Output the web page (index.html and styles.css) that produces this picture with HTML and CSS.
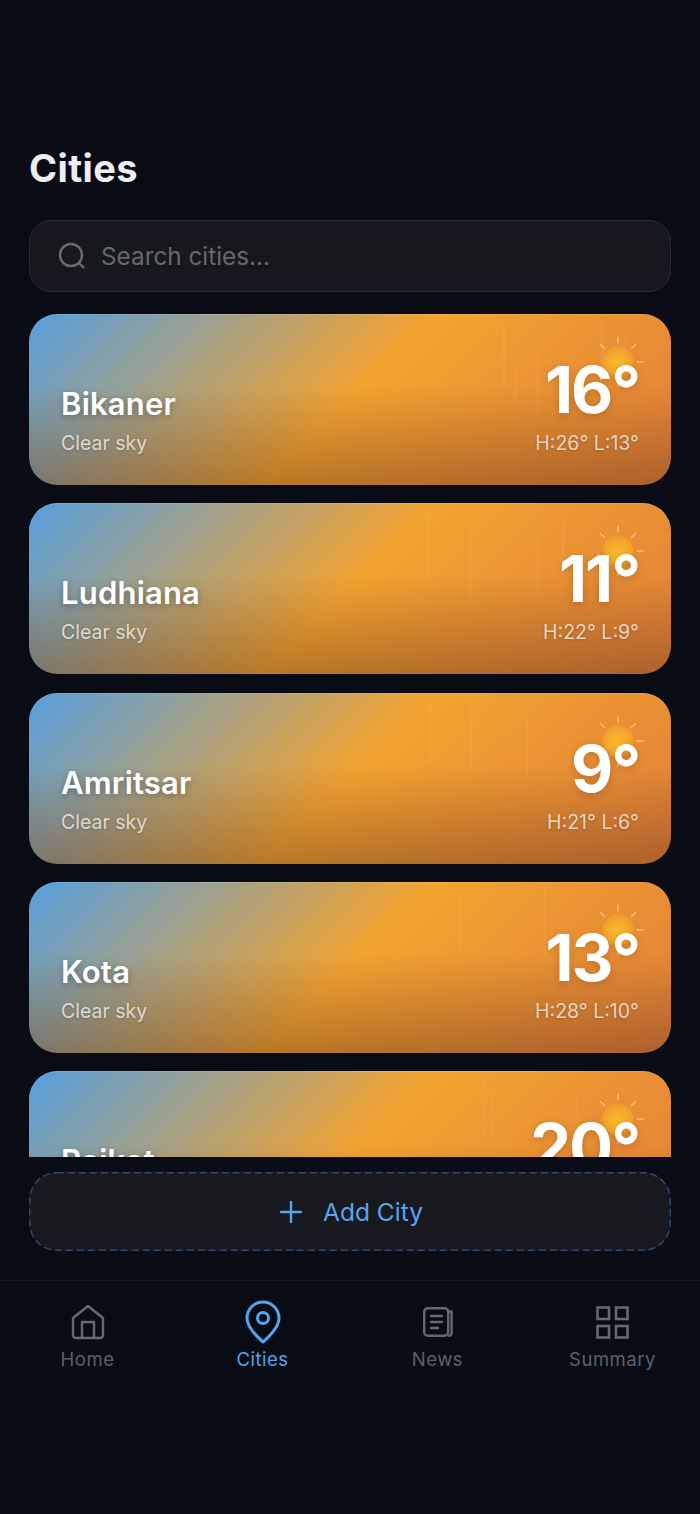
FILE: index.html
```html
<!DOCTYPE html>
<html lang="en">
<head>
    <meta charset="UTF-8">
    <meta name="viewport" content="width=device-width, initial-scale=1.0">
    <title>Cities</title>
    <link rel="stylesheet" href="styles.css">
</head>
<body>

<svg class="defs" width="0" height="0" aria-hidden="true">
    <defs>
        <radialGradient id="sunFill" cx="50%" cy="55%" r="50%">
            <stop offset="0%" stop-color="#fbbb2c"/>
            <stop offset="75%" stop-color="#f4a82b"/>
            <stop offset="100%" stop-color="#ee9f2e"/>
        </radialGradient>
        <symbol id="sun" viewBox="0 0 60 60">
            <circle cx="30" cy="30" r="15.5" fill="url(#sunFill)"/>
            <g stroke="#ffe2b0" stroke-opacity="0.6" stroke-width="1.4" stroke-linecap="round">
                <path d="M30 5v6M30 49v6M49 30h6M12.5 12.5l4 4M47.5 12.5l-4 4M12.5 47.5l4-4"/>
            </g>
        </symbol>
    </defs>
</svg>

<div class="screen">
    <h1 class="title">Cities</h1>

    <div class="search">
        <svg class="search-icon" viewBox="0 0 28 28" fill="none" stroke="#6a6b71" stroke-width="2.4" stroke-linecap="round">
            <circle cx="13" cy="13" r="11"/>
            <path d="M21.5 21.5l4 4"/>
        </svg>
        <span class="search-text">Search cities...</span>
    </div>

    <div class="city-list">
        <div class="city-card">
            <svg class="rain" viewBox="0 0 642 171" stroke="#ffffff" stroke-opacity="0.05" stroke-width="3">
                <path d="M475 10v60M486 50v40M509 35v70M573 5v70M596 25v40"/>
            </svg>
            <svg class="sun"><use href="#sun"/></svg>
            <div class="city-info">
                <div class="city-name">Bikaner</div>
                <div class="city-desc">Clear sky</div>
            </div>
            <div class="city-temp">
                <div class="temp">16°</div>
                <div class="range">H:26° L:13°</div>
            </div>
        </div>

        <div class="city-card">
            <svg class="rain" viewBox="0 0 642 171" stroke="#ffffff" stroke-opacity="0.05" stroke-width="3">
                <path d="M399 5v70M441 25v70M509 30v60M534 12v60"/>
            </svg>
            <svg class="sun"><use href="#sun"/></svg>
            <div class="city-info">
                <div class="city-name">Ludhiana</div>
                <div class="city-desc">Clear sky</div>
            </div>
            <div class="city-temp">
                <div class="temp">11°</div>
                <div class="range">H:22° L:9°</div>
            </div>
        </div>

        <div class="city-card">
            <svg class="rain" viewBox="0 0 642 171" stroke="#ffffff" stroke-opacity="0.05" stroke-width="3">
                <path d="M401 10v60M442 5v70M498 25v60"/>
            </svg>
            <svg class="sun"><use href="#sun"/></svg>
            <div class="city-info">
                <div class="city-name">Amritsar</div>
                <div class="city-desc">Clear sky</div>
            </div>
            <div class="city-temp">
                <div class="temp">9°</div>
                <div class="range">H:21° L:6°</div>
            </div>
        </div>

        <div class="city-card">
            <svg class="rain" viewBox="0 0 642 171" stroke="#ffffff" stroke-opacity="0.05" stroke-width="3">
                <path d="M432 12v60M516 5v70"/>
            </svg>
            <svg class="sun"><use href="#sun"/></svg>
            <div class="city-info">
                <div class="city-name">Kota</div>
                <div class="city-desc">Clear sky</div>
            </div>
            <div class="city-temp">
                <div class="temp">13°</div>
                <div class="range">H:28° L:10°</div>
            </div>
        </div>

        <div class="city-card">
            <svg class="rain" viewBox="0 0 642 171" stroke="#ffffff" stroke-opacity="0.04" stroke-width="3">
                <path d="M456 5v60M464 20v50M548 25v50"/>
            </svg>
            <svg class="sun"><use href="#sun"/></svg>
            <div class="city-info">
                <div class="city-name">Rajkot</div>
                <div class="city-desc">Clear sky</div>
            </div>
            <div class="city-temp">
                <div class="temp">20°</div>
                <div class="range">H:30° L:14°</div>
            </div>
        </div>
    </div>

    <div class="add-city">
        <svg class="add-border" viewBox="0 0 642 79" fill="none">
            <rect x="0.75" y="0.75" width="640.5" height="77.5" rx="27" stroke="#2f4a72" stroke-width="1.5" stroke-dasharray="7 4"/>
        </svg>
        <svg class="add-icon" viewBox="0 0 22 22" fill="none" stroke="#55a6ee" stroke-width="2.4" stroke-linecap="round">
            <path d="M11 1v20M1 11h20"/>
        </svg>
        <span>Add City</span>
    </div>

    <nav class="bottom-nav">
        <div class="nav-item">
            <div class="nav-icon">
                <svg class="icon-home" viewBox="0 0 34 36" fill="none" stroke="#68696f" stroke-width="2.4" stroke-linejoin="round">
                    <path d="M2 14L17 2l15 12v17a3 3 0 0 1-3 3H5a3 3 0 0 1-3-3z"/>
                    <path d="M11 34V18h12v16"/>
                </svg>
            </div>
            <span>Home</span>
        </div>
        <div class="nav-item active">
            <div class="nav-icon">
                <svg class="icon-pin" viewBox="0 0 36 44" fill="none" stroke="#55a6ee" stroke-width="3" stroke-linejoin="round">
                    <path d="M18 42C10 35 2 27 2 18a16 16 0 0 1 32 0c0 9-8 17-16 24z"/>
                    <circle cx="18" cy="18" r="5.5"/>
                </svg>
            </div>
            <span>Cities</span>
        </div>
        <div class="nav-item">
            <div class="nav-icon">
                <svg class="icon-news" viewBox="0 0 30 30" fill="none" stroke="#68696f" stroke-width="2.4" stroke-linecap="round" stroke-linejoin="round">
                    <rect x="1.2" y="1.2" width="24" height="27.6" rx="3.5"/>
                    <path d="M25.2 4.5h3.4v22a2.3 2.3 0 0 1-2.3 2.3"/>
                    <path d="M8 9h11M8 15h11M8 21h7"/>
                </svg>
            </div>
            <span>News</span>
        </div>
        <div class="nav-item">
            <div class="nav-icon">
                <svg class="icon-grid" viewBox="0 0 33 33" fill="none" stroke="#68696f" stroke-width="2.6">
                    <rect x="1.5" y="1.5" width="11.5" height="11.5"/>
                    <rect x="20" y="1.5" width="11.5" height="11.5"/>
                    <rect x="1.5" y="20" width="11.5" height="11.5"/>
                    <rect x="20" y="20" width="11.5" height="11.5"/>
                </svg>
            </div>
            <span>Summary</span>
        </div>
    </nav>
</div>

</body>
</html>
```

FILE: styles.css
```css
/* Global styling */
* {
    box-sizing: border-box;
}

body {
    font-family: 'Inter', 'Liberation Sans', sans-serif;
    background-color: #090c15;
    margin: 0;
    padding: 0;
}

.defs {
    position: absolute;
}

.screen {
    width: 700px;
    height: 1514px;
    padding-top: 146px;
    overflow: hidden;
}

.title {
    margin: 0 29px;
    height: 45px;
    font-size: 38px;
    line-height: 45px;
    font-weight: 700;
    letter-spacing: 0.4px;
    color: #eeeef4;
}

/* Search box */
.search {
    display: flex;
    align-items: center;
    gap: 15px;
    height: 72px;
    margin: 29px 29px 22px;
    padding: 0 28px;
    background-color: #17181e;
    border: 1px solid #2a2b31;
    border-radius: 22px;
}

.search-icon {
    width: 28px;
    height: 28px;
}

.search-text {
    font-size: 24.3px;
    color: #66676d;
}

/* City cards */
.city-list {
    display: flex;
    flex-direction: column;
    gap: 18.3px;
    height: 843px;
    margin: 0 29px;
    overflow: hidden;
}

.city-card {
    position: relative;
    flex: none;
    display: flex;
    justify-content: space-between;
    align-items: flex-end;
    height: 171px;
    padding: 0 32px 28px 32px;
    border-radius: 28px;
    overflow: hidden;
    background:
        linear-gradient(180deg, rgba(0, 0, 0, 0) 42%, rgba(60, 30, 20, 0.32) 100%),
        linear-gradient(135deg, #559fdf 0%, #f3a32f 50%, #e27f38 100%);
    box-shadow: inset 0 1px 0 rgba(255, 255, 255, 0.12);
}

.rain {
    position: absolute;
    inset: 0;
    width: 100%;
    height: 100%;
}

.sun {
    position: absolute;
    top: 18px;
    right: 23px;
    width: 60px;
    height: 60px;
}

.city-info,
.city-temp {
    position: relative;
}

.city-name {
    font-size: 31px;
    line-height: 38px;
    font-weight: 600;
    letter-spacing: 0.2px;
    color: #ffffff;
    text-shadow: 0 2px 6px rgba(0, 0, 0, 0.3);
}

.city-desc {
    margin-top: 6px;
    font-size: 19.5px;
    line-height: 28px;
    color: rgba(255, 255, 255, 0.72);
    text-shadow: 0 1px 3px rgba(0, 0, 0, 0.2);
}

.city-temp {
    text-align: right;
}

.temp {
    font-size: 65px;
    line-height: 76px;
    font-weight: 700;
    letter-spacing: -2px;
    color: #ffffff;
    text-shadow: 0 2px 8px rgba(0, 0, 0, 0.18);
}

.range {
    margin-top: 1px;
    font-size: 19.5px;
    line-height: 28px;
    letter-spacing: 0;
    color: rgba(255, 255, 255, 0.72);
    text-shadow: 0 1px 3px rgba(0, 0, 0, 0.2);
}

/* Add button */
.add-city {
    position: relative;
    display: flex;
    align-items: center;
    justify-content: center;
    gap: 21px;
    height: 79px;
    margin: 15px 29px 29px;
    padding-left: 3px;
    background-color: #18191f;
    border-radius: 28px;
    font-size: 24.5px;
    color: #55a6ee;
}

.add-border {
    position: absolute;
    inset: 0;
    width: 100%;
    height: 100%;
}

.add-icon {
    width: 22px;
    height: 22px;
}

/* Bottom navigation */
.bottom-nav {
    display: grid;
    grid-template-columns: repeat(4, 175px);
    padding-top: 18px;
    border-top: 1px solid #171a22;
}

.nav-item {
    display: flex;
    flex-direction: column;
    align-items: center;
    font-size: 18.5px;
    line-height: 24px;
    letter-spacing: 0.5px;
    color: #5f6066;
}

.nav-item.active {
    color: #55a6ee;
}

.nav-icon {
    display: flex;
    align-items: center;
    justify-content: center;
    height: 46px;
    margin-bottom: 2px;
}

.icon-home {
    width: 34px;
    height: 36px;
}

.icon-pin {
    width: 36px;
    height: 44px;
}

.icon-news {
    width: 30px;
    height: 30px;
}

.icon-grid {
    width: 33px;
    height: 33px;
}
```
